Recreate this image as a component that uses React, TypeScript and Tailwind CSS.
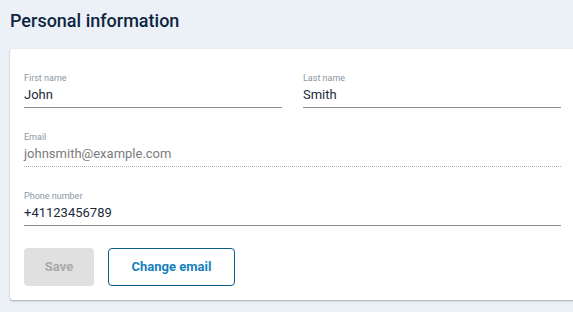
import React from "react";

type FieldProps = {
  label: string;
  value: string;
  disabled?: boolean;
};

function Field({ label, value, disabled }: FieldProps) {
  return (
    <div className="flex flex-col">
      <span className="text-[9px] leading-[12px] text-[#8b96a2]">{label}</span>
      <div
        className={
          disabled
            ? "mt-[2px] h-[22px] border-b border-dotted border-[#b5b5b5] text-[13px] leading-[18px] text-[#7b7b7b]"
            : "mt-[2px] h-[22px] border-b border-[#8e8e8e] text-[13px] leading-[18px] text-[#1b2a3a]"
        }
      >
        {value}
      </div>
    </div>
  );
}

export default function App() {
  return (
    <div
      className="min-h-[312px] w-[573px] overflow-hidden bg-[#ecf1f8] pl-[10px]"
      style={{ fontFamily: "Roboto, 'Liberation Sans', sans-serif" }}
    >
      <h2 className="pt-[9px] text-[18px] leading-[24px] font-medium text-[#0d2540]">
        Personal information
      </h2>
      <div className="mt-[16px] w-[565px] rounded-l-[3px] bg-white px-[14px] pt-[23px] pb-[14px] shadow-[0_1px_2px_rgba(0,0,0,0.3)]">
        <div className="grid grid-cols-2 gap-x-[21px]">
          <Field label="First name" value="John" />
          <Field label="Last name" value="Smith" />
        </div>
        <div className="mt-[23px]">
          <Field label="Email" value="johnsmith@example.com" disabled />
        </div>
        <div className="mt-[23px]">
          <Field label="Phone number" value="+41123456789" />
        </div>
        <div className="mt-[22px] flex gap-[14px]">
          <button
            disabled
            className="h-[38px] w-[70px] rounded-[4px] bg-[#e0e0e0] text-[13px] font-bold text-[#a9a9a9]"
          >
            Save
          </button>
          <button className="h-[38px] w-[127px] rounded-[4px] border border-[#0d5b86] bg-white text-[13px] font-bold text-[#1680bd]">
            Change email
          </button>
        </div>
      </div>
    </div>
  );
}
